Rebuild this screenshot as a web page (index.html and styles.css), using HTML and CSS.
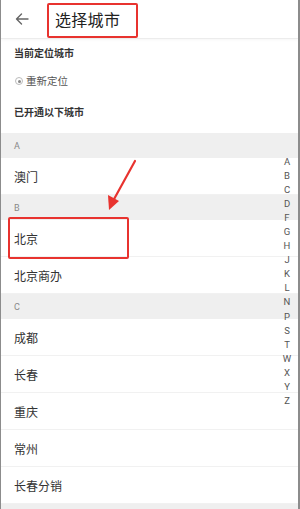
FILE: index.html
```html
<!DOCTYPE html>
<html lang="zh">
<head>
<meta charset="utf-8">
<link rel="stylesheet" href="styles.css">
</head>
<body>
<div class="phone">
  <header class="topbar">
    <svg class="back" width="14" height="12" viewBox="0 0 14 12"><path d="M13 6H1.5M6.5 1L1.5 6l5 5" fill="none" stroke="#666" stroke-width="1.4" stroke-linecap="round" stroke-linejoin="round"/></svg>
    <h1 class="title">选择城市</h1>
  </header>
  <section class="intro">
    <div class="label">当前定位城市</div>
    <div class="locate"><span class="dot"></span>重新定位</div>
    <div class="label label2">已开通以下城市</div>
  </section>
  <ul class="list">
    <li class="band">A</li>
    <li class="row">澳门</li>
    <li class="band">B</li>
    <li class="row">北京</li>
    <li class="row">北京商办</li>
    <li class="band">C</li>
    <li class="row">成都</li>
    <li class="row">长春</li>
    <li class="row">重庆</li>
    <li class="row">常州</li>
    <li class="row">长春分销</li>
    <li class="band"></li>
  </ul>
  <ol class="index">
    <li>A</li><li>B</li><li>C</li><li>D</li><li>F</li><li>G</li><li>H</li><li>J</li><li>K</li><li>L</li><li>N</li><li>P</li><li>S</li><li>T</li><li>W</li><li>X</li><li>Y</li><li>Z</li>
  </ol>
  <div class="mark mark-title"></div>
  <div class="mark mark-city"></div>
  <svg class="arrow" width="300" height="509" viewBox="0 0 300 509"><path d="M135 161L113 201" stroke="#e8332f" stroke-width="2.2" stroke-linecap="round"/><path d="M109 210L108 195L119 201Z" fill="#e8332f"/></svg>
</div>
</body>
</html>
```
FILE: styles.css
```css
* { margin: 0; padding: 0; box-sizing: border-box; }
html, body { width: 300px; height: 509px; overflow: hidden; background: #fff; }
body { font-family: "Noto Sans CJK SC", "Noto Sans", sans-serif; color: #333; }
.phone {
  position: relative;
  width: 300px;
  height: 509px;
  border-left: 1px solid #8c8c8c;
  border-right: 2px solid #8c8c8c;
  overflow: hidden;
}
.topbar {
  height: 39px;
  display: flex;
  align-items: center;
  padding-left: 14px;
  border-bottom: 1px solid #ececec;
  box-shadow: 0 1px 3px rgba(0,0,0,0.04);
}
.back { display: block; }
.title {
  margin-left: 26px;
  font-size: 16px;
  font-weight: 400;
  color: #222;
  letter-spacing: 0.3px;
}
.intro { padding: 7px 13px 0; height: 94px; }
.label { font-size: 10px; font-weight: 700; color: #333; line-height: 14px; }
.locate {
  display: flex;
  align-items: center;
  gap: 3px;
  margin-top: 14px;
  font-size: 10.5px;
  color: #555;
  line-height: 14px;
  padding-left: 1px;
}
.dot {
  width: 8px; height: 8px;
  border-radius: 50%;
  border: 1px solid #bbb;
  display: flex; align-items: center; justify-content: center;
}
.dot::after { content: ""; width: 3px; height: 3px; border-radius: 50%; background: #888; }
.label2 { margin-top: 17px; }
.list { list-style: none; }
.band {
  height: 25px;
  background: #efefef;
  font-size: 9px;
  color: #888;
  padding-left: 13px;
  display: flex;
  align-items: center;
  font-family: "Roboto", "Noto Sans", sans-serif;
}
.row {
  height: 37px;
  border-bottom: 1px solid #f1f1f1;
  display: flex;
  align-items: center;
  padding-left: 13px;
  font-size: 12px;
  color: #333;
}
.row:last-of-type { border-bottom: none; }
.index {
  position: absolute;
  right: 5px;
  top: 155px;
  list-style: none;
  font-family: "Roboto", "Noto Sans", sans-serif;
  font-size: 9.5px;
  color: #555;
  text-align: center;
  width: 12px;
}
.index li { height: 14.06px; line-height: 14px; }
.mark {
  position: absolute;
  border: 2px solid #e8332f;
  border-radius: 2px;
}
.mark-title { left: 46px; top: 3px; width: 91px; height: 35px; }
.mark-city { left: 7px; top: 217px; width: 121px; height: 42px; }
.arrow { position: absolute; left: -1px; top: 0; pointer-events: none; }
```
